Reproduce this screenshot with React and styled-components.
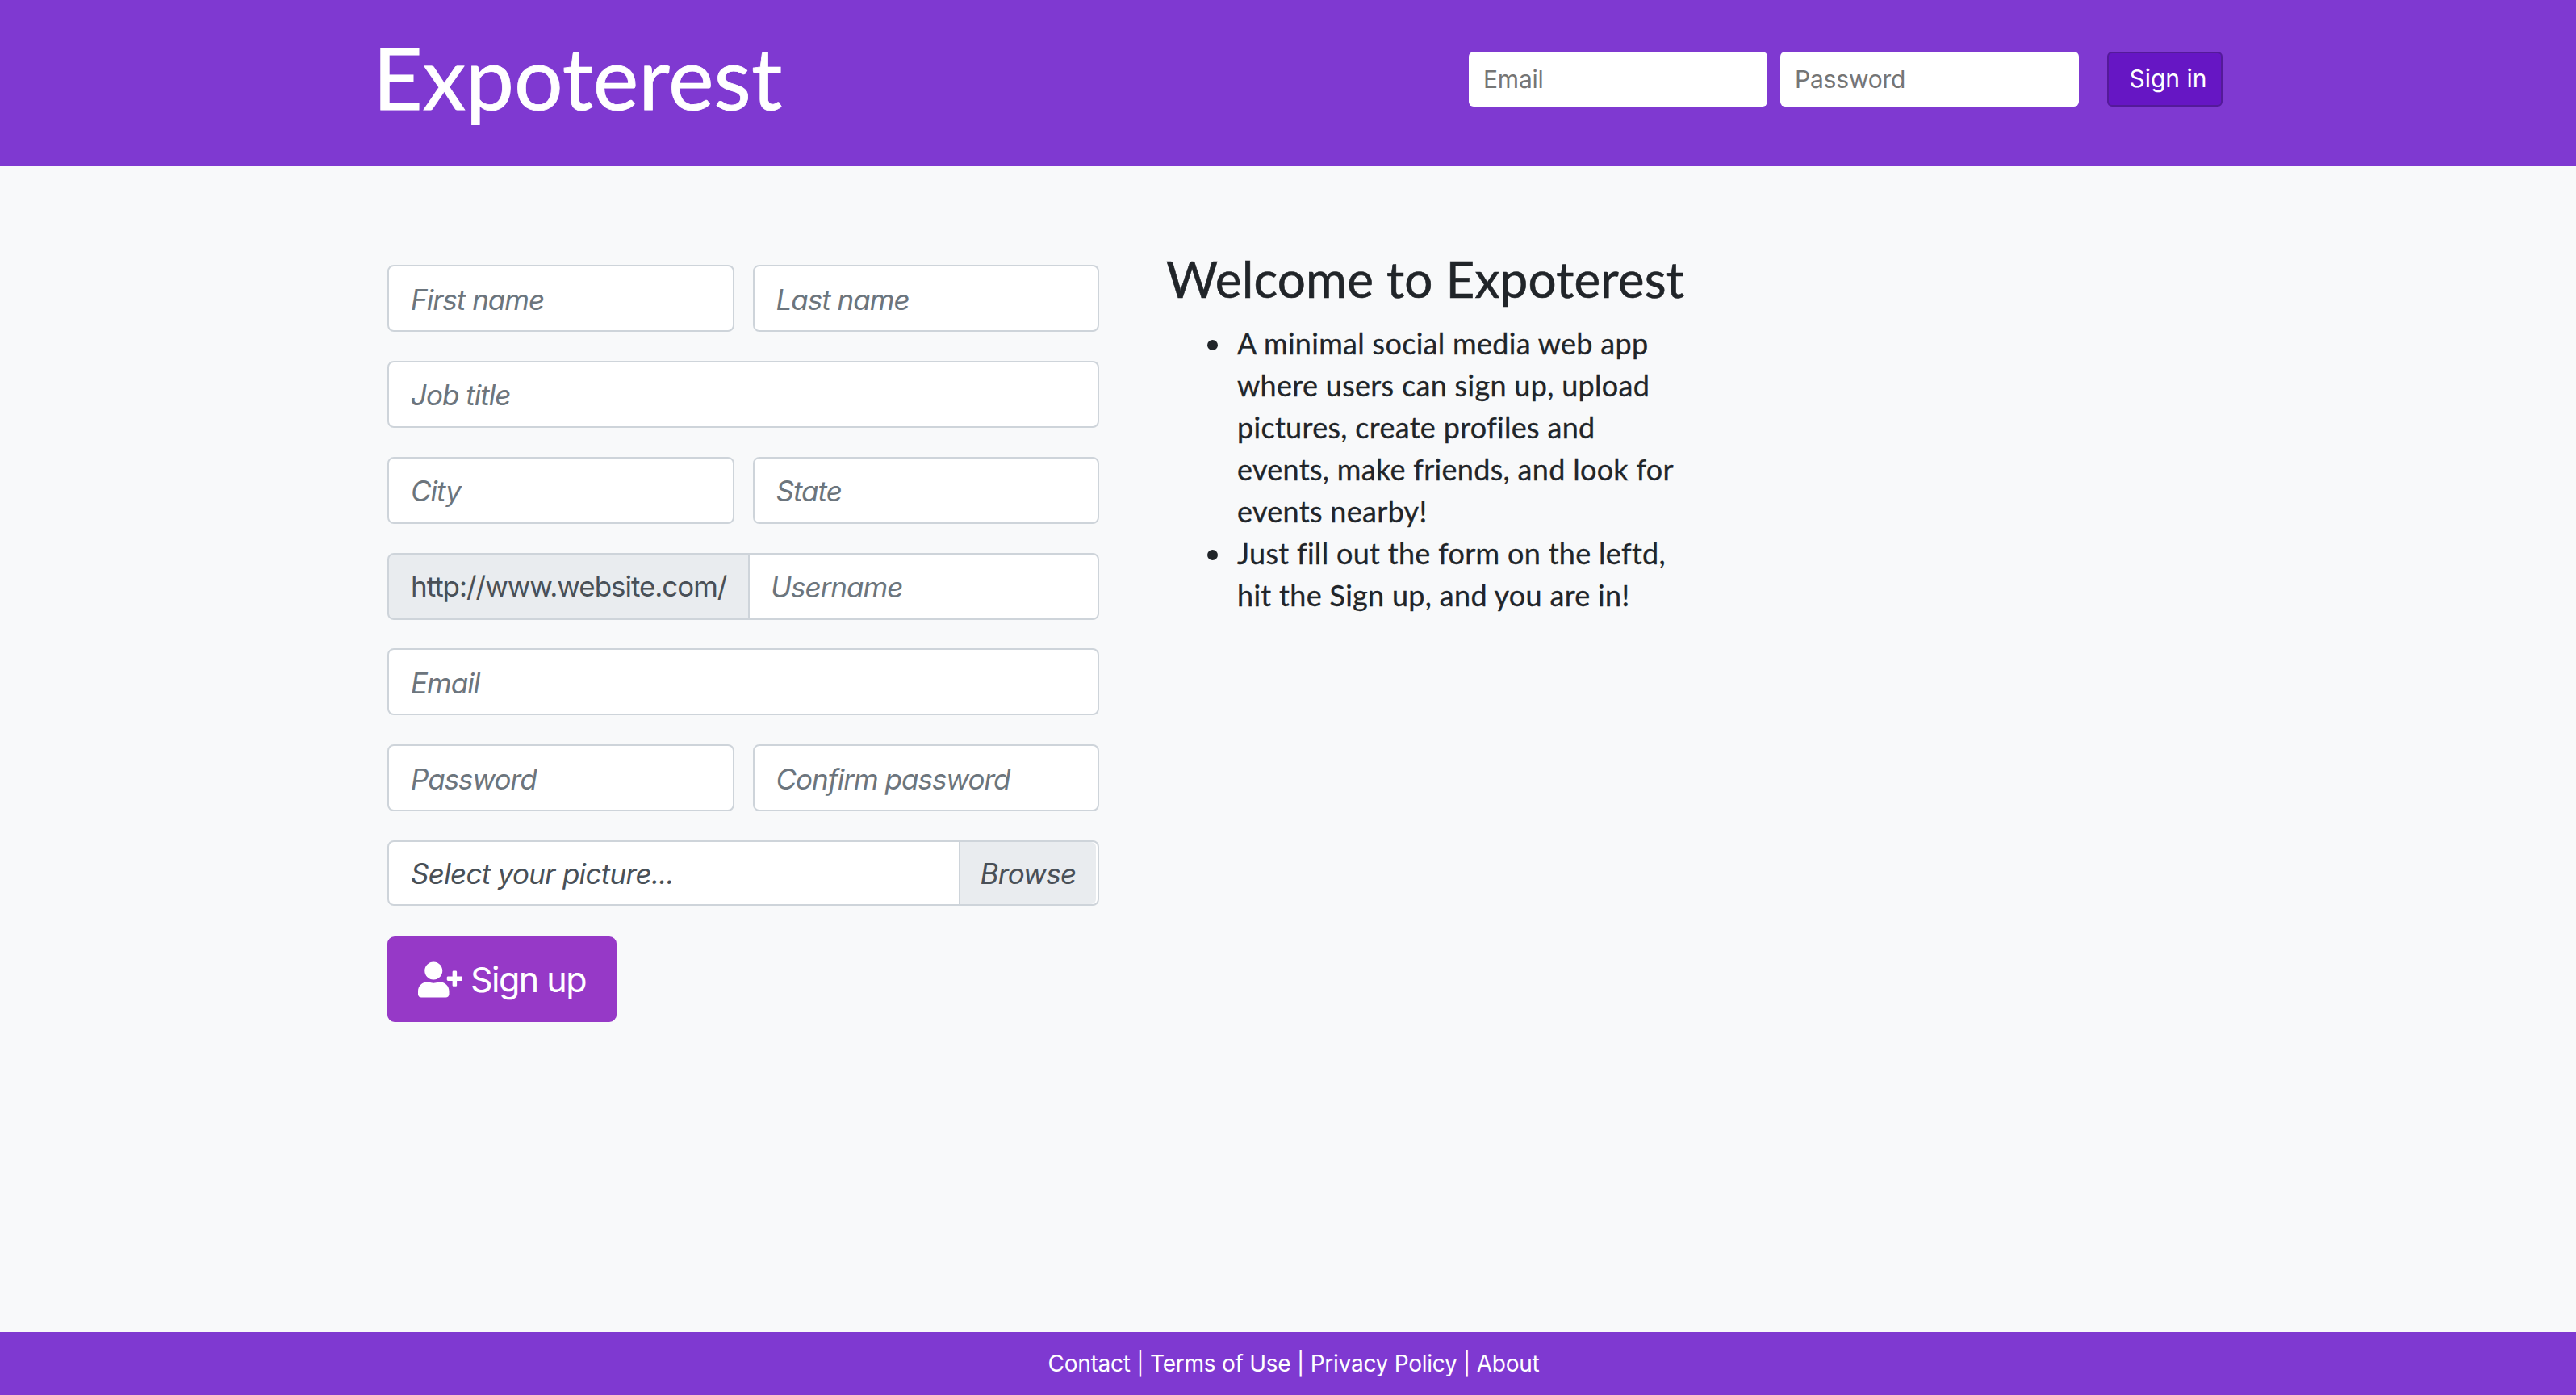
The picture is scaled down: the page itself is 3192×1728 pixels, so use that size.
import React from "react";
import styled, { createGlobalStyle } from "styled-components";
import { FaUserPlus } from "react-icons/fa";

const GlobalStyle = createGlobalStyle`
  html, body {
    margin: 0;
    padding: 0;
  }
  body {
    background: #f8f9fa;
    font-family: Inter, "Liberation Sans", sans-serif;
    color: #212529;
  }
  * {
    box-sizing: border-box;
  }
`;

const Page = styled.div`
  min-height: 1728px;
  display: flex;
  flex-direction: column;
`;

const Header = styled.header`
  height: 206px;
  background: #7f39d1;
  display: flex;
  align-items: flex-start;
  justify-content: space-between;
  padding: 0 438px 0 462px;
`;

const Logo = styled.div`
  font-family: Lato, sans-serif;
  font-size: 107px;
  line-height: 190px;
  color: #fff;
  -webkit-text-stroke: 0.8px #fff;
`;

const SignInForm = styled.form`
  display: flex;
  margin-top: 64px;
`;

const SignInInput = styled.input`
  width: 370px;
  height: 68px;
  margin-right: 16px;
  padding: 0 18px;
  border: 0;
  border-radius: 6px;
  background: #fff;
  font-family: Inter, sans-serif;
  font-size: 30px;
  letter-spacing: -0.2px;
  &::placeholder {
    color: #757575;
    opacity: 1;
  }
`;

const SignInButton = styled.button`
  width: 143px;
  height: 68px;
  margin-left: 19px;
  padding: 0 0 2px 8px;
  border: 2px solid #541a9a;
  border-radius: 6px;
  background: #6616c4;
  color: #fff;
  font-family: Inter, sans-serif;
  font-size: 30px;
`;

const Main = styled.main`
  flex: 1;
  display: flex;
  align-items: flex-start;
  padding: 100px 0 0 480px;
`;

const SignUpForm = styled.form`
  width: 882px;
  margin-top: 22px;
  display: flex;
  flex-direction: column;
  gap: 35.86px;
`;

const Row = styled.div`
  display: flex;
  gap: 23px;
`;

const Field = styled.input`
  flex: 1;
  min-width: 0;
  height: 83px;
  padding: 2px 27px 0;
  border: 2px solid #ced4da;
  border-radius: 8px;
  background: #fff;
  font-family: Inter, sans-serif;
  font-size: 35px;
  font-style: italic;
  letter-spacing: -1px;
  &::placeholder {
    color: #6c757d;
    opacity: 1;
  }
`;

const InputGroup = styled.div`
  height: 83px;
  display: flex;
`;

const Addon = styled.span`
  width: 447px;
  flex-shrink: 0;
  display: flex;
  align-items: center;
  padding-left: 27px;
  border: 2px solid #ced4da;
  border-right: 0;
  border-radius: 8px 0 0 8px;
  background: #e9ecef;
  color: #495057;
  font-size: 35px;
  letter-spacing: -1.05px;
  white-space: nowrap;
`;

const GroupField = styled(Field)`
  padding-left: 26px;
  border-radius: 0 8px 8px 0;
`;

const FilePicker = styled.label`
  height: 81px;
  margin-bottom: 2px;
  display: flex;
  align-items: center;
  justify-content: space-between;
  padding-left: 27px;
  border: 2px solid #ced4da;
  border-radius: 8px;
  background: #fff;
  color: #495057;
  font-size: 35px;
  font-style: italic;
  letter-spacing: -0.7px;
`;

const BrowseButton = styled.span`
  height: 100%;
  width: 170px;
  margin-right: 2px;
  display: flex;
  align-items: center;
  justify-content: center;
  border-left: 2px solid #ced4da;
  border-radius: 0 6px 6px 0;
  background: #e9ecef;
`;

const SignUpButton = styled.button`
  align-self: flex-start;
  width: 284px;
  height: 106px;
  display: flex;
  align-items: center;
  gap: 10px;
  padding: 0 0 0 38px;
  border: 0;
  border-radius: 9px;
  background: #9639c7;
  color: #fff;
  font-family: Inter, sans-serif;
  font-size: 43px;
  letter-spacing: -1.5px;
  svg {
    flex-shrink: 0;
  }
`;

const Welcome = styled.section`
  margin-left: 83px;
`;

const WelcomeTitle = styled.h2`
  margin: 0;
  font-family: Lato, sans-serif;
  font-size: 62px;
  font-weight: 400;
  line-height: 78px;
  letter-spacing: 0.15px;
  color: #212529;
  -webkit-text-stroke: 0.6px #212529;
`;

const WelcomeList = styled.ul`
  margin: 15px 0 0;
  padding-left: 88px;
  list-style: none;
  font-family: Lato, sans-serif;
  font-size: 36px;
  line-height: 52px;
  letter-spacing: 0.3px;
  color: #212529;
  -webkit-text-stroke: 0.3px #212529;
`;

const WelcomeItem = styled.li`
  position: relative;
  &::before {
    content: "";
    position: absolute;
    left: -37px;
    top: 22px;
    width: 13px;
    height: 13px;
    border-radius: 50%;
    background: #212529;
  }
`;

const Footer = styled.footer`
  height: 78px;
  display: flex;
  align-items: center;
  justify-content: center;
  padding-left: 14px;
  background: #7f39d1;
  color: #fff;
  font-size: 28px;
  letter-spacing: -0.25px;
`;

const fieldsTop = [
  ["First name", "Last name"],
  ["Job title"],
  ["City", "State"],
];

const App = () => {
  return (
    <Page>
      <GlobalStyle />
      <Header>
        <Logo>Expoterest</Logo>
        <SignInForm>
          <SignInInput placeholder="Email" />
          <SignInInput placeholder="Password" />
          <SignInButton type="button">Sign in</SignInButton>
        </SignInForm>
      </Header>
      <Main>
        <SignUpForm>
          {fieldsTop.map((row) => (
            <Row key={row[0]}>
              {row.map((name) => (
                <Field key={name} placeholder={name} />
              ))}
            </Row>
          ))}
          <InputGroup>
            <Addon>http://www.website.com/</Addon>
            <GroupField placeholder="Username" />
          </InputGroup>
          <Row>
            <Field placeholder="Email" />
          </Row>
          <Row>
            <Field placeholder="Password" />
            <Field placeholder="Confirm password" />
          </Row>
          <FilePicker>
            Select your picture...
            <BrowseButton>Browse</BrowseButton>
          </FilePicker>
          <SignUpButton type="button">
            <FaUserPlus size={55} />
            Sign up
          </SignUpButton>
        </SignUpForm>
        <Welcome>
          <WelcomeTitle>Welcome to Expoterest</WelcomeTitle>
          <WelcomeList>
            <WelcomeItem>
              A minimal social media web app
              <br />
              where users can sign up, upload
              <br />
              pictures, create profiles and
              <br />
              events, make friends, and look for
              <br />
              events nearby!
            </WelcomeItem>
            <WelcomeItem>
              Just fill out the form on the leftd,
              <br />
              hit the Sign up, and you are in!
            </WelcomeItem>
          </WelcomeList>
        </Welcome>
      </Main>
      <Footer>Contact | Terms of Use | Privacy Policy | About</Footer>
    </Page>
  );
};

export default App;
